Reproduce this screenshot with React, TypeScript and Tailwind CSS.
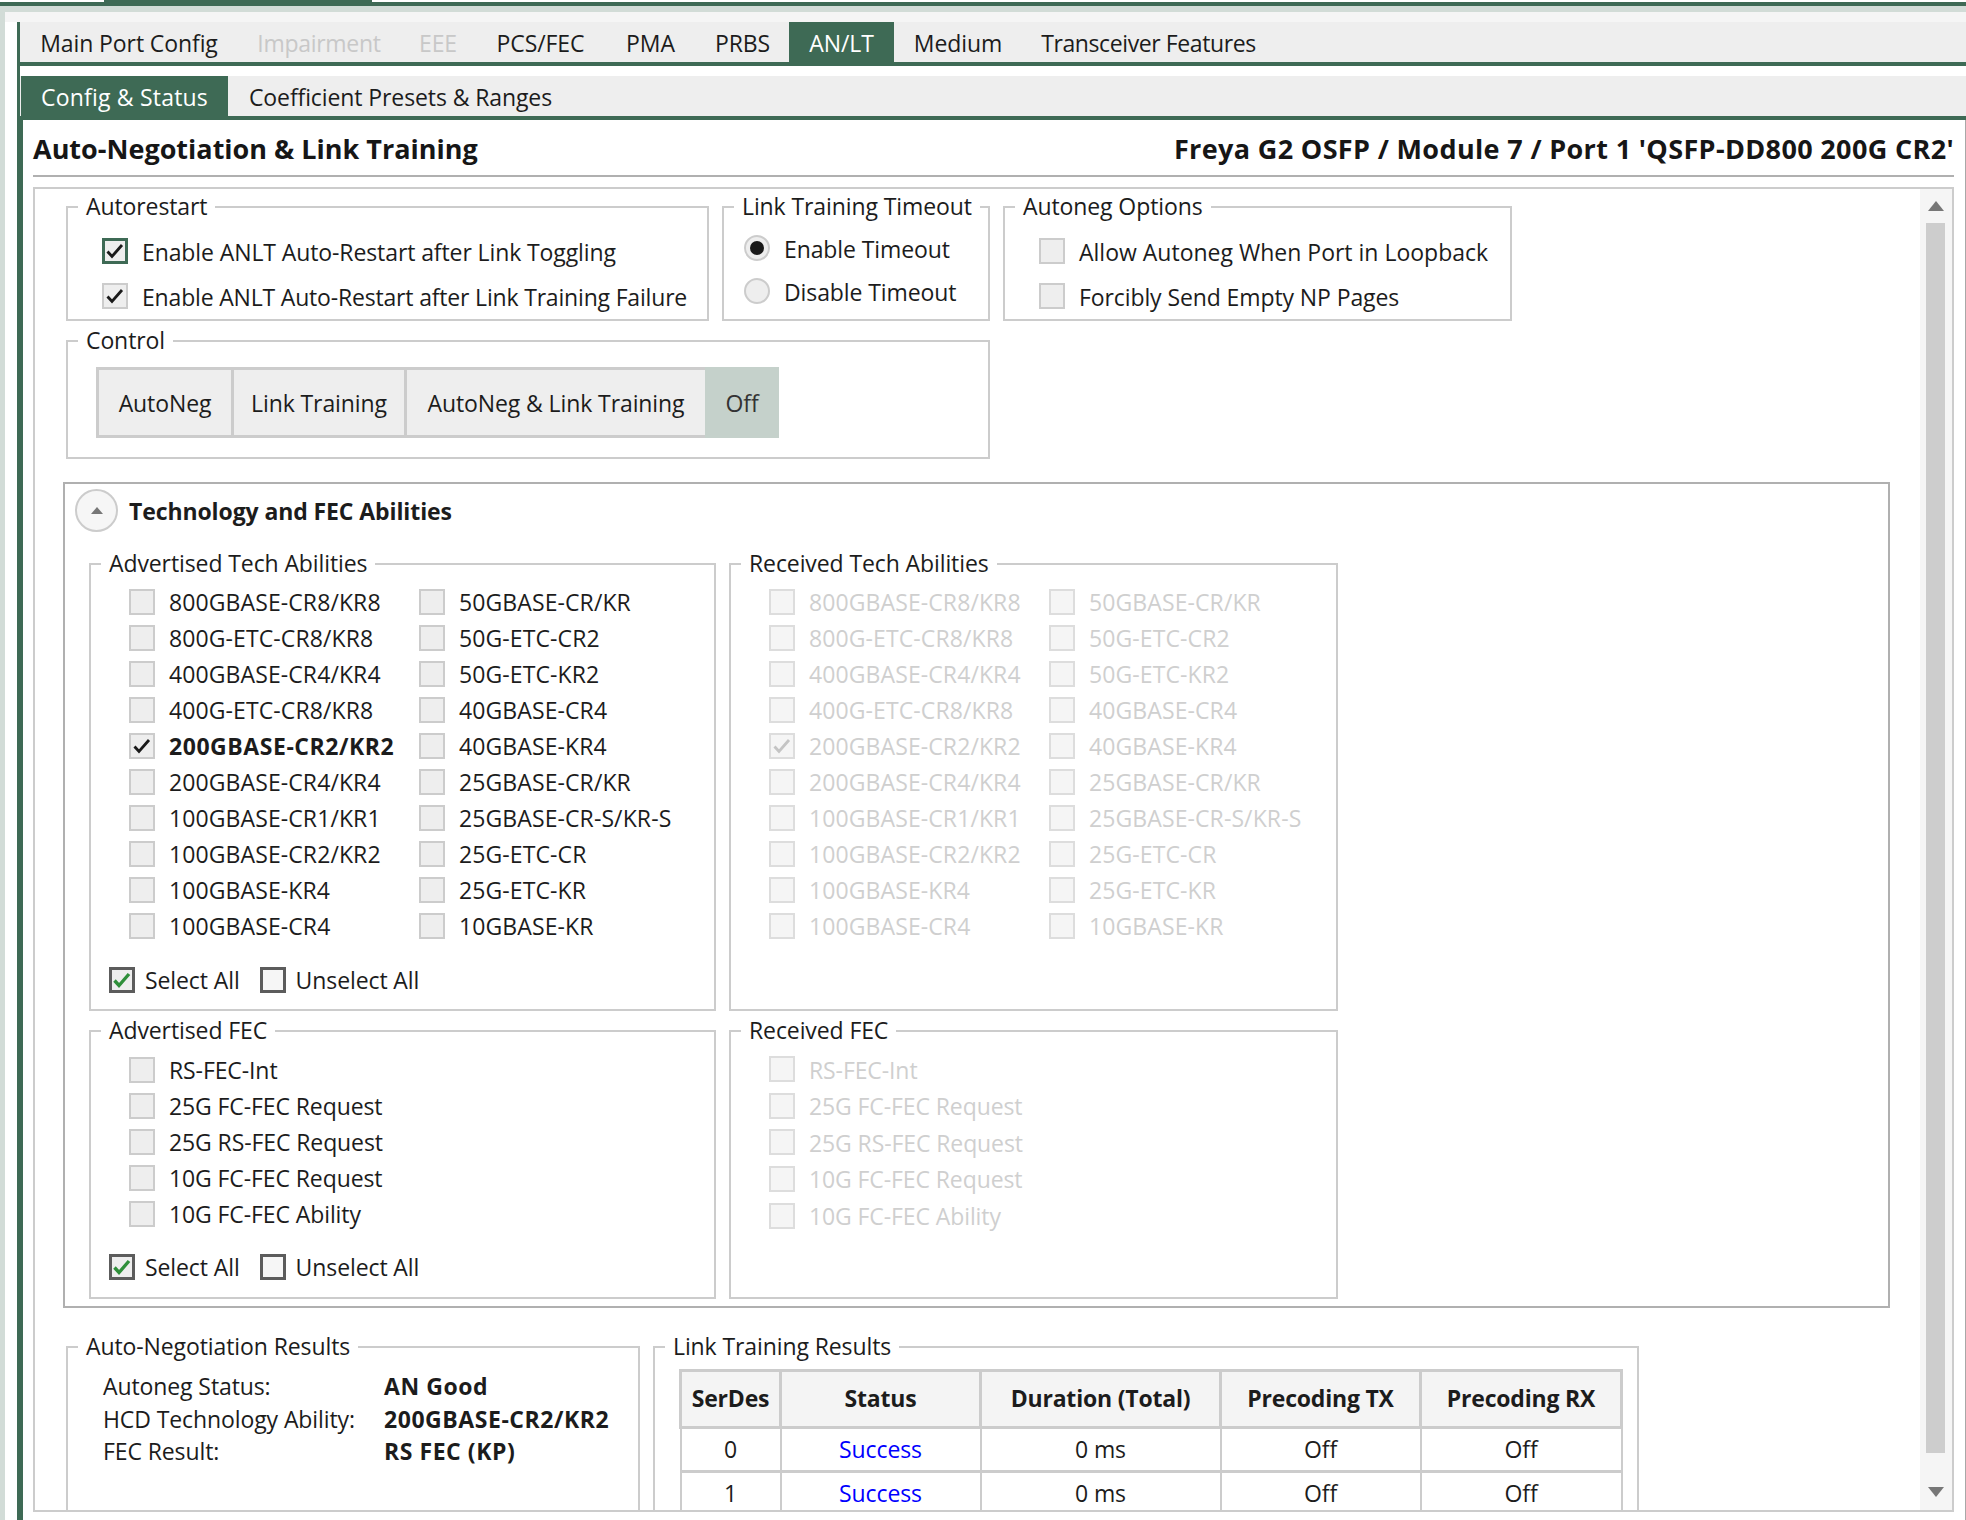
import type { ReactNode } from 'react'

const GREEN = 'bg-[#3e6a55]'

const mainTabs = [
  { label: 'Main Port Config', width: 'w-[218px]' },
  { label: 'Impairment', width: 'w-[162px] tracking-[-0.3px]', disabled: true },
  { label: 'EEE', width: 'w-[76px]', disabled: true },
  { label: 'PCS/FEC', width: 'w-[129px]' },
  { label: 'PMA', width: 'w-[91px]' },
  { label: 'PRBS', width: 'w-[93px]' },
  { label: 'AN/LT', width: 'w-[105px]', active: true },
  { label: 'Medium', width: 'w-[128px]' },
  { label: 'Transceiver Features', width: 'w-[253px] tracking-[-0.4px]' },
]

const techLeft = [
  '800GBASE-CR8/KR8',
  '800G-ETC-CR8/KR8',
  '400GBASE-CR4/KR4',
  '400G-ETC-CR8/KR8',
  '200GBASE-CR2/KR2',
  '200GBASE-CR4/KR4',
  '100GBASE-CR1/KR1',
  '100GBASE-CR2/KR2',
  '100GBASE-KR4',
  '100GBASE-CR4',
]

const techRight = [
  '50GBASE-CR/KR',
  '50G-ETC-CR2',
  '50G-ETC-KR2',
  '40GBASE-CR4',
  '40GBASE-KR4',
  '25GBASE-CR/KR',
  '25GBASE-CR-S/KR-S',
  '25G-ETC-CR',
  '25G-ETC-KR',
  '10GBASE-KR',
]

const fecItems = ['RS-FEC-Int', '25G FC-FEC Request', '25G RS-FEC Request', '10G FC-FEC Request', '10G FC-FEC Ability']

const tableRows = [
  { serdes: '0', status: 'Success', duration: '0 ms', tx: 'Off', rx: 'Off' },
  { serdes: '1', status: 'Success', duration: '0 ms', tx: 'Off', rx: 'Off' },
]

function Group({ title, className, children }: { title: string; className: string; children: ReactNode }) {
  return (
    <fieldset className={`border-2 border-[#cccccc] shrink-0 min-w-0 ${className}`}>
      <legend className="ml-[10px] px-[8px] h-[32px] leading-[30px]">{title}</legend>
      {children}
    </fieldset>
  )
}

function Check({ color = '#1a1a1a', weight = 2.8 }: { color?: string; weight?: number }) {
  return (
    <svg viewBox="0 0 22 22" className="w-[22px] h-[22px] shrink-0" fill="none" stroke={color} strokeWidth={weight}>
      <path d="M3.5 11.5 L8 16.5 L18 5" />
    </svg>
  )
}

function CheckRow({
  label,
  checked,
  bold,
  disabled,
  focused,
  textPad = 'pt-[1px]',
  className,
}: {
  label: string
  checked?: boolean
  bold?: boolean
  disabled?: boolean
  focused?: boolean
  textPad?: string
  className: string
}) {
  let box = 'border-2 border-[#cccccc] bg-[#eeeeee]'
  if (disabled) box = 'border-2 border-[#dddddd] bg-[#f5f5f5]'
  if (focused) box = 'border-[3px] border-[#3e6a55] bg-[#eeeeee]'
  return (
    <div className={`flex items-center ${className}`}>
      <div className={`w-[26px] h-[26px] flex items-center justify-center shrink-0 ${box}`}>
        {checked && <Check color={disabled ? '#c4c4c4' : '#1a1a1a'} />}
      </div>
      <span
        className={`ml-[14px] whitespace-nowrap ${textPad} ${disabled ? 'text-[#cfcfcf]' : ''} ${
          bold ? 'font-bold tracking-[0.55px]' : ''
        }`}
      >
        {label}
      </span>
    </div>
  )
}

function SelectAllRow() {
  return (
    <div className="flex items-center h-[26px] ml-[18px]">
      <div className="w-[26px] h-[26px] border-[3px] border-[#5c5c5c] bg-[#eeeeee] flex items-center justify-center">
        <Check color="#2f8f3a" weight={3.4} />
      </div>
      <span className="ml-[10px]">Select All</span>
      <div className="ml-[20px] w-[26px] h-[26px] border-[3px] border-[#5c5c5c] bg-[#f6f6f6]" />
      <span className="ml-[10px]">Unselect All</span>
    </div>
  )
}

function TechGrid({ disabled }: { disabled?: boolean }) {
  return (
    <div className="flex pl-[38px] pt-[4px] tracking-[0.1px]">
      <div className={disabled ? 'w-[280px]' : 'w-[290px]'}>
        {techLeft.map((label) => (
          <CheckRow
            key={label}
            label={label}
            className="h-[36px]"
            disabled={disabled}
            checked={label === '200GBASE-CR2/KR2'}
            bold={!disabled && label === '200GBASE-CR2/KR2'}
          />
        ))}
      </div>
      <div>
        {techRight.map((label) => (
          <CheckRow key={label} label={label} className="h-[36px]" disabled={disabled} />
        ))}
      </div>
    </div>
  )
}

function Radio({ label, checked, className }: { label: string; checked?: boolean; className: string }) {
  return (
    <div className={`flex items-center ${className}`}>
      <div className="w-[26px] h-[26px] rounded-full border-2 border-[#cccccc] bg-[#eeeeee] flex items-center justify-center">
        {checked && <div className="w-[14px] h-[14px] rounded-full bg-[#1a1a1a]" />}
      </div>
      <span className="ml-[14px] pt-[2px]">{label}</span>
    </div>
  )
}

function Scrollbar() {
  return (
    <div className="w-[32px] shrink-0 bg-[#f5f5f5] flex flex-col items-center pr-[1px]">
      <div className="h-[34px] flex items-center justify-center">
        <div className="w-0 h-0 border-l-[8px] border-r-[8px] border-b-[10px] border-l-transparent border-r-transparent border-b-[#777777]" />
      </div>
      <div className="w-[19px] h-[1230px] bg-[#cdcdcd]" />
      <div className="flex-1 flex items-end justify-center pb-[13px]">
        <div className="w-0 h-0 border-l-[8px] border-r-[8px] border-t-[10px] border-l-transparent border-r-transparent border-t-[#777777]" />
      </div>
    </div>
  )
}

export default function App() {
  return (
    <div className="w-[1966px] h-[1520px] overflow-hidden bg-white flex flex-col font-['Open_Sans',sans-serif] text-[23px] tracking-[-0.1px] text-[#1c1c1c]">
      {/* window strip on top */}
      <div className="flex h-[6px] shrink-0">
        <div className="w-[104px] border-b-4 border-[#3e6a55]" />
        <div className={`w-[268px] ${GREEN}`} />
        <div className="flex-1 border-b-4 border-[#3e6a55]" />
      </div>
      <div className="h-[6px] shrink-0 bg-[#d2dcd7]" />

      <div className="flex flex-1 min-h-0">
        <div className="w-[5px] bg-[#d2dcd7] shrink-0" />
        <div className="flex-1 flex flex-col min-w-0">
          <div className="h-[10px] bg-[#f5f5f5] shrink-0" />

          <div className="flex-1 flex flex-col min-h-0 ml-[12px] border-l-[3px] border-[#3e6a55]">
            {/* main tabs */}
            <div className="flex h-[44px] shrink-0 bg-[#eeeeee] border-b-4 border-[#3e6a55]">
              {mainTabs.map((tab) => (
                <div
                  key={tab.label}
                  className={`${tab.width} pt-[2px] flex items-center justify-center whitespace-nowrap ${
                    tab.active ? `${GREEN} text-white` : tab.disabled ? 'text-[#c8c8c8]' : ''
                  }`}
                >
                  {tab.label}
                </div>
              ))}
            </div>
            <div className="h-[10px] shrink-0" />

            {/* sub tabs */}
            <div className="flex h-[44px] shrink-0 bg-[#eeeeee] border-b-4 border-[#3e6a55] pl-[1px]">
              <div className={`w-[207px] pt-[2px] flex items-center justify-center whitespace-nowrap text-white tracking-[0.2px] ${GREEN}`}>
                Config &amp; Status
              </div>
              <div className="w-[345px] pt-[2px] flex items-center justify-center whitespace-nowrap">
                Coefficient Presets &amp; Ranges
              </div>
            </div>

            <div className="flex-1 min-h-0 flex flex-col border-l-[3px] border-[#3e6a55] border-r border-r-[#a8a8a8] pl-[10px] pr-[11px] pb-[8px]">
              <div className="h-[57px] pt-[3px] shrink-0 flex items-center justify-between border-b-2 border-[#b0b0b0] font-bold text-[27px] tracking-[0px] text-[#161616]">
                <span>Auto-Negotiation &amp; Link Training</span>
                <span className="tracking-[0.35px]">Freya G2 OSFP / Module 7 / Port 1 &apos;QSFP-DD800 200G CR2&apos;</span>
              </div>

              <div className="mt-[10px] flex-1 min-h-0 flex border-2 border-[#cccccc]">
                <div className="flex-1 min-w-0 overflow-hidden pl-[31px] pt-[2px]">
                  <div className="flex gap-[13px]">
                    <Group title="Autorestart" className="w-[643px] h-[130px]">
                      <div className="pl-[34px] pt-[15px]">
                        <CheckRow label="Enable ANLT Auto-Restart after Link Toggling" className="h-[26px] mb-[19px]" textPad="pt-[2px]" checked focused />
                        <CheckRow label="Enable ANLT Auto-Restart after Link Training Failure" className="h-[26px] tracking-[-0.18px]" textPad="pt-[2px]" checked />
                      </div>
                    </Group>
                    <Group title="Link Training Timeout" className="w-[268px] h-[130px]">
                      <div className="pl-[20px] pt-[12px]">
                        <Radio label="Enable Timeout" className="h-[26px] mb-[17px]" checked />
                        <Radio label="Disable Timeout" className="h-[26px]" />
                      </div>
                    </Group>
                    <Group title="Autoneg Options" className="w-[509px] h-[130px]">
                      <div className="pl-[34px] pt-[15px]">
                        <CheckRow label="Allow Autoneg When Port in Loopback" className="h-[26px] mb-[19px] tracking-[0px]" textPad="pt-[2px]" />
                        <CheckRow label="Forcibly Send Empty NP Pages" className="h-[26px]" textPad="pt-[2px]" />
                      </div>
                    </Group>
                  </div>

                  <Group title="Control" className="w-[924px] h-[134px] mt-[4px]">
                    <div className="flex pl-[28px] pt-[10px]">
                      {[
                        { label: 'AutoNeg', width: 'w-[135px]' },
                        { label: 'Link Training', width: 'w-[173px]' },
                        { label: 'AutoNeg & Link Training', width: 'w-[301px]' },
                      ].map((btn) => (
                        <div
                          key={btn.label}
                          className={`${btn.width} h-[71px] pt-[2px] flex items-center justify-center bg-[#eeeeee] border-y-[3px] border-l-[3px] border-[#cccccc] whitespace-nowrap`}
                        >
                          {btn.label}
                        </div>
                      ))}
                      <div className="h-[71px] w-[74px] pt-[2px] flex items-center justify-center bg-[#c5d1cb] text-[#333333]">Off</div>
                    </div>
                  </Group>

                  {/* expander */}
                  <div className="w-[1827px] h-[826px] mt-[23px] -ml-[3px] border-2 border-[#b0b0b0] pl-[24px]">
                    <div className="flex items-center h-[64px] pb-[11px] -ml-[14px]">
                      <div className="w-[43px] h-[43px] rounded-full border-2 border-[#cccccc] bg-[#f6f6f6] flex items-center justify-center">
                        <div className="w-0 h-0 border-l-[6px] border-r-[6px] border-b-[7px] border-l-transparent border-r-transparent border-b-[#777777]" />
                      </div>
                      <span className="ml-[11px] pt-[2px] font-bold tracking-[-0.1px]">Technology and FEC Abilities</span>
                    </div>
                    <div className="flex gap-[13px]">
                      <Group title="Advertised Tech Abilities" className="w-[627px] h-[463px]">
                        <TechGrid />
                        <div className="mt-[23px]">
                          <SelectAllRow />
                        </div>
                      </Group>
                      <Group title="Received Tech Abilities" className="w-[609px] h-[463px]">
                        <TechGrid disabled />
                      </Group>
                    </div>
                    <div className="flex gap-[13px] mt-[4px]">
                      <Group title="Advertised FEC" className="w-[627px] h-[284px]">
                        <div className="pl-[38px] pt-[5px]">
                          {fecItems.map((label) => (
                            <CheckRow key={label} label={label} className="h-[36px]" />
                          ))}
                        </div>
                        <div className="mt-[22px]">
                          <SelectAllRow />
                        </div>
                      </Group>
                      <Group title="Received FEC" className="w-[609px] h-[284px]">
                        <div className="pl-[38px] pt-[4px]">
                          {fecItems.map((label) => (
                            <CheckRow key={label} label={label} className="h-[36.6px]" disabled />
                          ))}
                        </div>
                      </Group>
                    </div>
                  </div>

                  {/* results */}
                  <div className="flex gap-[13px] mt-[23px]">
                    <Group title="Auto-Negotiation Results" className="w-[574px] h-[260px]">
                      <div className="pl-[35px] pt-[7px]">
                        {[
                          ['Autoneg Status:', 'AN Good'],
                          ['HCD Technology Ability:', '200GBASE-CR2/KR2'],
                          ['FEC Result:', 'RS FEC (KP)'],
                        ].map(([k, v]) => (
                          <div key={k} className="flex items-center h-[32.5px]">
                            <span className="w-[281px]">{k}</span>
                            <span className="font-bold tracking-[0.55px]">{v}</span>
                          </div>
                        ))}
                      </div>
                    </Group>
                    <Group title="Link Training Results" className="w-[986px] h-[260px]">
                      <div className="pl-[24px] pt-[6px]">
                        <table className="table-fixed border-collapse w-[941px] text-center">
                          <thead>
                            <tr className="h-[57px] bg-[#f4f4f4]">
                              <th className="w-[100px] pb-[2px] border-[3px] border-[#cccccc] font-bold tracking-[-0.2px]">SerDes</th>
                              <th className="w-[200px] pb-[2px] border-[3px] border-[#cccccc] font-bold tracking-[-0.2px]">Status</th>
                              <th className="w-[240px] pb-[2px] border-[3px] border-[#cccccc] font-bold tracking-[-0.2px]">Duration (Total)</th>
                              <th className="w-[200px] pb-[2px] border-[3px] border-[#cccccc] font-bold tracking-[-0.2px]">Precoding TX</th>
                              <th className="w-[201px] pb-[2px] border-[3px] border-[#cccccc] font-bold tracking-[-0.2px]">Precoding RX</th>
                            </tr>
                          </thead>
                          <tbody>
                            {tableRows.map((row) => (
                              <tr key={row.serdes} className="h-[44px]">
                                <td className="border-x-2 border-y-[3px] border-[#cccccc]">{row.serdes}</td>
                                <td className="border-x-2 border-y-[3px] border-[#cccccc] text-[#0000ff]">{row.status}</td>
                                <td className="border-x-2 border-y-[3px] border-[#cccccc]">{row.duration}</td>
                                <td className="border-x-2 border-y-[3px] border-[#cccccc]">{row.tx}</td>
                                <td className="border-x-2 border-y-[3px] border-[#cccccc]">{row.rx}</td>
                              </tr>
                            ))}
                          </tbody>
                        </table>
                      </div>
                    </Group>
                  </div>
                </div>
                <Scrollbar />
              </div>
            </div>
          </div>
        </div>
      </div>
    </div>
  )
}
